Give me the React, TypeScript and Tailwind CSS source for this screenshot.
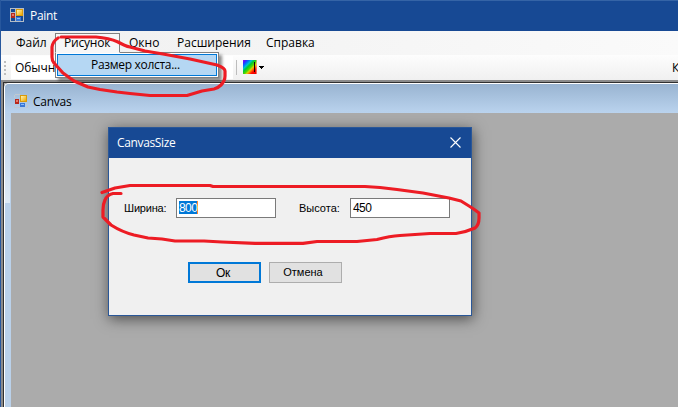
import type { ReactNode } from 'react';

function FormIcon({ framed = false }: { framed?: boolean }) {
  return (
    <svg width="14" height="14" viewBox="0 0 14 14" className="block shrink-0" shapeRendering="crispEdges">
      <defs>
        <linearGradient id="gold" x1="0" y1="0" x2="1" y2="1">
          <stop offset="0" stopColor="#fff3b0" />
          <stop offset="1" stopColor="#f0a800" />
        </linearGradient>
      </defs>
      {framed && <path d="M0 .5h14M.5 0v14M5.5 0v14M13.5 0v14M0 13.5h14M0 4.5h6" stroke="#b4bcc6" fill="none" />}
      {!framed && <path d="M1 .5h5M.5 1v3M.5 12v1.500h5M13.500 11v2.500h-2" stroke="#c0c8d0" fill="none" />}
      <rect x="1" y="5" width="4" height="5" fill="#b8281c" />
      <rect x="2" y="6" width="2" height="2" fill="#e67868" />
      <rect x="6" y="1" width="7" height="7" fill="#d99a0a" />
      <rect x="7" y="2" width="5" height="5" fill="url(#gold)" />
      <rect x="6" y="9" width="5" height="4" fill="#3978d8" />
      <rect x="7" y="10" width="3" height="1" fill="#91bdf5" />
    </svg>
  );
}

function ColorIcon() {
  return (
    <svg width="14" height="14" viewBox="0 0 14 14" className="block" shapeRendering="crispEdges">
      <defs>
        <linearGradient id="rainbow" x1="0" y1="0" x2="1" y2="1">
          <stop offset="0" stopColor="#a000f0" />
          <stop offset=".12" stopColor="#4020ff" />
          <stop offset=".22" stopColor="#0070ff" />
          <stop offset=".32" stopColor="#00c0d0" />
          <stop offset=".42" stopColor="#00c830" />
          <stop offset=".54" stopColor="#50d800" />
          <stop offset=".62" stopColor="#e0d000" />
          <stop offset=".7" stopColor="#ff6000" />
          <stop offset=".78" stopColor="#ff0800" />
          <stop offset="1" stopColor="#e00000" />
        </linearGradient>
      </defs>
      <rect width="14" height="14" fill="url(#rainbow)" />
      <rect x="11" y="2" width="1" height="10" fill="#180000" />
      <rect x="13" y="0" width="1" height="14" fill="#ffb0a0" opacity=".6" />
    </svg>
  );
}

function MenuItem({ children, className }: { children: ReactNode; className: string }) {
  return <div className={`flex h-5 shrink-0 items-center whitespace-nowrap border border-transparent pl-2 ${className}`}>{children}</div>;
}

function Field({ value, selected = false }: { value: string; selected?: boolean }) {
  return (
    <div className="flex h-5 w-[100px] shrink-0 items-center border border-[#7a7a7a] bg-white pb-px pl-[2px] text-[12px] tracking-[-0.6px]">
      <span className={`flex h-[13px] items-center ${selected ? 'border-r border-[#ff872d] bg-[#0078d7] text-white' : ''}`}>{value}</span>
    </div>
  );
}

function SizeDialog() {
  return (
    <section className="absolute left-[107px] top-[127px] flex h-[189px] w-[364px] flex-col border border-[#2a5798] bg-[#f0f0f0] shadow-[1px_3px_13px_rgba(0,0,0,0.55)]">
      <header className="flex h-[30px] shrink-0 items-center justify-between bg-[#174994] pl-2 pr-[10px] text-white">
        <span className="font-['Open_Sans','Noto_Sans',sans-serif] text-[12px] tracking-[-0.35px]">CanvasSize</span>
        <svg width="11" height="11" viewBox="0 0 11 11" className="-mt-[2px]"><path d="M.5.5l10 10m0-10l-10 10" stroke="white" strokeWidth="1.100" /></svg>
      </header>
      <div className="flex flex-col pt-10 font-['Liberation_Sans',Arial,sans-serif] text-[11px] leading-none text-black">
        <div className="flex h-5 items-center">
          <label className="w-[67px] whitespace-nowrap pl-[15px] tracking-[-0.2px]">Ширина:</label>
          <Field value="800" selected />
          <label className="w-[74px] whitespace-nowrap pl-[23px]">Высота:</label>
          <Field value="450" />
        </div>
        <div className="flex gap-2 pl-[79px] pt-11">
          <button className="h-[21px] w-[73px] border-2 border-[#0078d7] bg-[#e1e1e1] pr-[3px] text-[12px] tracking-[-0.3px]">Ок</button>
          <button className="h-[21px] w-[73px] border border-[#adadad] bg-[#e1e1e1] pr-[5px]">Отмена</button>
        </div>
      </div>
    </section>
  );
}

export default function App() {
  return (
    <main className="relative flex h-[407px] w-[678px] flex-col overflow-hidden border-l border-[#27579d] bg-[#ababab] font-['Open_Sans','Noto_Sans',sans-serif] text-[12px] leading-none text-black">
      <header className="flex h-[31px] shrink-0 items-center gap-[6px] border-t border-[#3564a6] bg-[#174994] pb-[2px] pl-[9px] text-white">
        <FormIcon framed />
        <span className="pt-px tracking-[-0.3px]">Paint</span>
      </header>
      <nav className="relative flex h-6 shrink-0 items-center bg-gradient-to-r from-[#f0f0f0] to-[#fafafa] pl-[6px]">
        <MenuItem className="w-12">Файл</MenuItem>
        <MenuItem className="z-20 w-[65px] border-x-[#808080] border-t-[#808080] bg-[#f7f7f7] tracking-[-0.2px]">Рисунок</MenuItem>
        <MenuItem className="w-12">Окно</MenuItem>
        <MenuItem className="w-[89px]">Расширения</MenuItem>
        <MenuItem className="w-[70px]">Справка</MenuItem>
        <div className="absolute left-[54px] top-[21px] z-10 h-[26px] w-[164px] border border-[#808080] bg-white p-px shadow-[3px_3px_3px_rgba(0,0,0,0.45)]">
          <div className="flex h-full items-center border border-[#0078d7] bg-[#b5d7f3] pl-[33px] tracking-[-0.3px]">Размер холста...</div>
        </div>
      </nav>
      <div className="flex h-[25px] shrink-0 items-center bg-gradient-to-b from-[#fdfdfd] to-[#f0f0f0]">
        <div className="ml-[3px] flex w-[7px] flex-col gap-[2px]">
          <i className="size-[2px] bg-[#bdbdbd]" /><i className="size-[2px] bg-[#bdbdbd]" /><i className="size-[2px] bg-[#bdbdbd]" /><i className="size-[2px] bg-[#bdbdbd]" />
        </div>
        <div className="flex h-[23px] w-[222px] items-center bg-white pl-1 tracking-[-0.05px]">Обычн</div>
        <div className="ml-[3px] h-[15px] w-px bg-[#bdbdbd]" />
        <div className="-mt-px ml-[6px]"><ColorIcon /></div>
        <svg width="5" height="3" className="ml-[2px]" shapeRendering="crispEdges"><path d="M0 0h5v1h-1v1h-1v1h-1v-1h-1v-1h-1z" fill="black" /></svg>
        <span className="ml-auto w-[6px] tracking-[-1.5px]">К</span>
      </div>
      <div className="flex min-h-0 flex-1 flex-col border-l-2 border-t-2 border-[#8b8b8b]">
        <div className="flex min-h-0 flex-1 flex-col border-l border-t border-[#303030]">
          <section className="flex min-h-0 flex-1 flex-col rounded-tl-[5px] border-l border-t border-white bg-[#bad1ea]">
            <header className="flex h-[29px] shrink-0 items-center gap-[5px] rounded-tl-[4px] bg-gradient-to-b from-[#99b4d1] to-[#bad3ee] pl-[9px] pt-[5px]">
              <FormIcon />
              <span className="pt-px tracking-[-0.25px]">Canvas</span>
            </header>
            <div className="flex min-h-0 flex-1">
              <div className="flex w-[6px] flex-col bg-[#bad1ea]"><div className="h-[90px] w-[5px] bg-gradient-to-b from-[#bad1ea] to-[#dfeaf5]" /></div>
              <div className="flex-1 bg-[#ababab]" />
            </div>
          </section>
        </div>
      </div>
      <SizeDialog />
      <svg width="678" height="407" viewBox="0 0 678 407" className="pointer-events-none absolute -left-px top-0 z-30" fill="none" stroke="#ed1c24" strokeWidth="3.200" strokeLinecap="round" strokeLinejoin="round">
        <path d="M61 37H96Q109 38 118 42Q125 46 130 47L145 51L163 54L190 59L217 65Q225 68 225 71V76Q225 81 221 85Q218 88 214 89L202 91L187 95.500H150L130 93.500L117 92L100 89.500L88 87L74 81L63 73L54 63Q52 61 52 57V47Q53 41 58 38" />
        <path d="M121 193.500H113Q107 195 105 200Q103 204 103 210V217L111 225Q122 232 134 235L148 238L162 239L175 241H204L222 242L255 243.300H303L317 241.500H357L377 239.500Q390 236 400 235.500L430 233.500H456Q466 232 475 228Q479 225 479 218V213Q474 209 469 206L461 201L449 198L423 193L397 189.500L380 187.500L365 186.500H213L210 185.500H130L115 188L102 192.500" />
      </svg>
    </main>
  );
}
